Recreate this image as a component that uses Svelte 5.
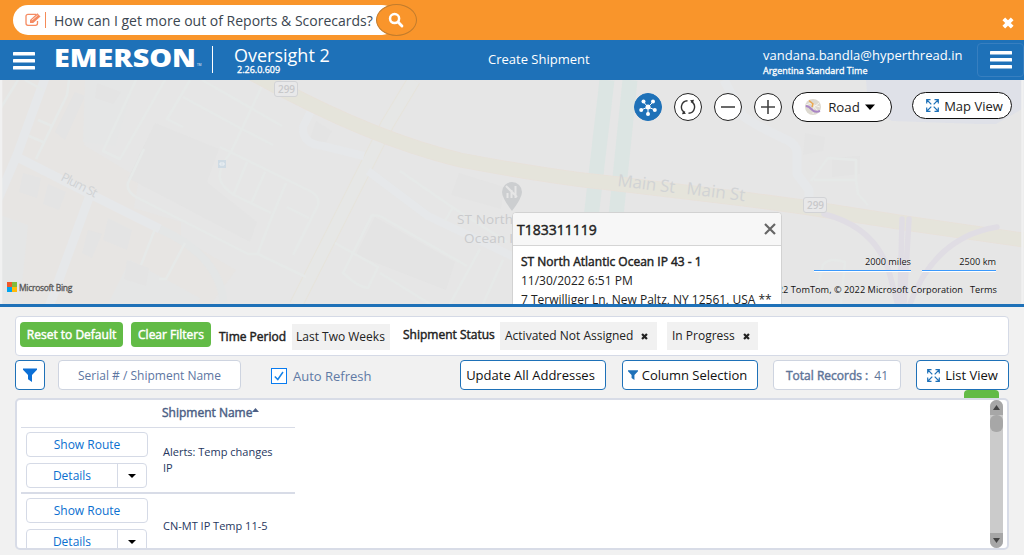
<script>
  let autoRefresh = $state(true);
  const shipments = ['Alerts: Temp changes IP', 'CN-MT IP Temp 11-5'];
</script>

{#snippet funnel(size)}
  <svg width={size} height={size} viewBox="0 0 14 14"><path fill="currentColor" d="M0 .5h14v1.300L9 7v7L5 11.200V7L0 1.800z" /></svg>
{/snippet}

{#snippet expand()}
  <svg width="13" height="13" viewBox="0 0 13 13" fill="none" stroke="#1e71b8" stroke-width="1.200">
    <path d="M.7 4.500V.7h3.800M8.500.7h3.800v3.800M12.300 8.500v3.800H8.500M4.500 12.300H.7V8.500M1 1l4.300 4.300M12 1 7.700 5.300M12 12 7.700 7.700M1 12l4.300-4.300" />
  </svg>
{/snippet}

{#snippet bars()}
  <svg class="bars" width="22" height="18" viewBox="0 0 22 18" fill="#fff"><rect y="0" width="22" height="3.600" rx=".6" /><rect y="7" width="22" height="3.600" rx=".6" /><rect y="14" width="22" height="3.600" rx=".6" /></svg>
{/snippet}

{#snippet cross(size)}
  <svg width={size} height={size} viewBox="0 0 10 10"><path d="M1.500 1.500 8.500 8.500M8.500 1.500 1.500 8.500" stroke="currentColor" stroke-width="3.200" /></svg>
{/snippet}

<div class="page">
  <div class="help">
    <div class="question">
      <svg class="edit" width="17" height="14" viewBox="0 0 17 14" fill="none" stroke="#f58b62" stroke-width="1.300">
        <path d="M11 1.300H3A2 2 0 0 0 1 3.300v7a2 2 0 0 0 2 2h7.500a2 2 0 0 0 2-2V8" />
        <path d="M5 10V6.900L12.300.3l3.200 3.100L8.200 10z" fill="#f58b62" stroke="none" />
        <path d="m6.800 7.200 5.700-4.800" stroke="#fff" stroke-width=".7" />
      </svg>
      <i></i><span>How can I get more out of Reports &amp; Scorecards?</span>
    </div>
    <button class="search" aria-label="Search">
      <svg width="16" height="16" viewBox="0 0 18 18" fill="none" stroke="#fff"><circle cx="7.400" cy="7.400" r="5.100" stroke-width="2.800" /><path d="m11.300 11.300 4.400 4.400" stroke-width="3.200" stroke-linecap="round" /></svg>
    </button>
    <button class="dismiss" aria-label="Close">{@render cross(12)}</button>
  </div>

  <header>
    <button class="menu" aria-label="Menu">{@render bars()}</button>
    <svg class="logo" width="151" height="30" viewBox="0 0 151 30" fill="#fff">
      <text x="0" y="21" font-size="23.800" font-weight="800" textLength="142" lengthAdjust="spacingAndGlyphs">EMERSON</text>
      <text x="143" y="20" font-size="3">TM</text>
    </svg>
    <div class="product"><strong>Oversight 2</strong><small>2.26.0.609</small></div>
    <span class="create">Create Shipment</span>
    <div class="user"><span>vandana.bandla@hyperthread.in</span><small>Argentina Standard Time</small></div>
    <button class="menu right" aria-label="Options">{@render bars()}</button>
  </header>

  <section class="map">
    <svg class="tiles" width="1024" height="224" viewBox="0 0 1024 224" fill="none">
      <rect width="1024" height="224" fill="#e6e6e6" />
      <path d="M0 0h92L84 65l55 33-5 30 47 14 0 16 55 32-25 34H0z" fill="#e7e5e3" />
      <path d="M0 135 28 145 20 224H0zM85 0h50l-20 66-32-4zM130 180l70 38-2 6h-90z" fill="#e5e6e6" />
      <g fill="#e4e4e4">
        <path d="m155 43 64 26-12 33 50 40-7 20-122-64zM97 3l24 9-8 12-18-6zM65 60l-10-8 20-40 10 4zM23 93l18 5-4 20-18-6zM48 104l18 8-7 18-16-6zM88 150l14 4-10 24-10-5zM108 138l24 12-5 20-24-10zM127 180l22 8-3 18-22-7zM316 41l16 10-8 15-15-4zM459 93l45 14-3 22-50-14zM375 137l80 45-9 28-90-35zM805 53l20 4-2 14-20 4zM832 78l28-2v18l-28 3z" />
      </g>
      <path d="M866 0h158v28l-28 16h-17l-87-3-24-15z" fill="#dfe1e8" />
      <g stroke="#dce5e3" stroke-width="15"><path d="M607 0 581 224M630 0 607 224" /></g>
      <g stroke="#e6e4dc" stroke-width="14"><path d="m414 0-27 45-91 180" /></g>
      <g stroke="#e6e7e6" stroke-width="12"><path d="m414 0-27 45-91 180" /></g>
      <g stroke="#e6e8ea" stroke-linejoin="round">
        <path d="M45-2 17 75-4 124M17 77l73 37 70 35M90 115l-41 112" stroke-width="9" />
        <path d="M160 149q62 28 64 78" stroke="#e4e6e6" stroke-width="8" />
        <path d="m312 29-9 18q-1 17 20 19l41 10" stroke-width="8" />
        <path d="m368 91 60 45 88 42 40 30" stroke-width="8" />
        <path d="m724 0 19 36q10 8 44 24 9 4 10 12v22l12 16v12" stroke-width="9" />
      </g>
      <g stroke="#e6e9e8" stroke-width="2.500" stroke-linejoin="round">
        <path d="m18 0-18 29M69 0 67 15 36 79M25 0l18 10M38 40l14 6M29 56l14 6M136 0l-33 71 17 8 45-79M190 0l-23 39 16 8M183 17l57 31 33 17M202 0l80 46M262 6l-31 66q-13 16-11 27 2 8 14 16l37 18M220 67l90 44q10 5 8 14l-25 50M247 82l-14 34M265 92l-14 32M286 103l-15 36-13 34M287 127l22 11M144 69l-16 34q-2 8 8 14l112 57h10l48 23M155 149l-14 36M185 163l-19 36h-7M400 91l52 36 55 35M453 127l-8 14M362 155l-19 38q15 14 25 15l10-21-43-24M362 155l10-20 8 1 87 50M480 169l-30 55M503 180l-20 44M380 193l50 31" />
        <path d="m811 101 17-23 28 2v20h-42M856 100l2 14 10 11" />
        <path d="m817 210 6-25q6-8 22-3l-4 42" />
      </g>
      <path d="M250-8q115 65 210 88 90 17 150 23l134 16 59 8 102 16 125 18" stroke="#e8e1da" stroke-width="15" />
      <path d="M250-8q115 65 210 88 90 17 150 23l134 16 59 8 102 16 125 18" stroke="#e5e4db" stroke-width="13.500" />
      <path d="M824 134q55 14 67 65l7 27M902 139l-2 85M909 139l-5 85M997 147q-62 10-87 77" stroke="#e0dde4" stroke-width="5.500" stroke-linecap="round" />
      <g fill="#d1d3d5">
        <text x="60" y="100" font-size="12.500" transform="rotate(27 60 100)" textLength="39">Plum St</text>
        <text x="617" y="106" font-size="17" transform="rotate(7 617 106)" textLength="58">Main St</text>
        <text x="686" y="114" font-size="17" transform="rotate(7 686 114)" textLength="59">Main St</text>
        <text x="457" y="144" font-size="13.500" textLength="56" fill="#c9cacc">ST North</text>
        <text x="464" y="163" font-size="13.500" textLength="49" fill="#c9cacc">Ocean I</text>
      </g>
      <g fill="#e8e8e9" stroke="#d2d3d6"><rect x="274.500" y="1.500" width="23" height="15" rx="2.500" /><rect x="803.500" y="117.500" width="23" height="15" rx="2.500" /></g>
      <g font-size="10" fill="#c8c9cb" font-weight="600"><text x="278" y="13" textLength="17">299</text><text x="807" y="129" textLength="17">299</text></g>
      <path d="M512 131q-10-13-10-19a10 10 0 0 1 20 0q0 6-10 19z" fill="#ccced0" />
      <path d="M507.500 118v-5M511.500 118v-8M515.500 118v-12M506 106l11 11" stroke="#e6e6e6" stroke-width="2" />
      <rect x="218" y="80" width="8" height="8" fill="#cfdbe4" /><path d="M220 85v-2h4v2z" stroke="#edf1f4" />
      <path d="M1 0v224M1022.500 0v224" stroke="#f1f1f1" stroke-width="2.500" />
    </svg>

    <div class="bing">
      <svg width="10" height="10"><path fill="#f1592a" d="M0 0h5v5H0z" /><path fill="#80bb3e" d="M5 0h5v5H5z" /><path fill="#00a4ef" d="M0 5h5v5H0z" /><path fill="#ffba08" d="M5 5h5v5H5z" /></svg>
      <span>Microsoft Bing</span>
    </div>

    <div class="controls">
      <button class="round hub" aria-label="Cluster">
        <svg width="18" height="18" viewBox="0 0 18 18" fill="#fff" stroke="#fff"><path d="m9 9 5-5M9 9 4.500 4M9 9 2 12M9 9l0 7M9 9l7 3" stroke-width="1" /><g stroke="none"><circle cx="9" cy="9" r="2.500" /><circle cx="14" cy="3.500" r="2" /><circle cx="4.500" cy="3.500" r="2" /><circle cx="2.200" cy="12" r="2" /><circle cx="9" cy="16" r="2" /><circle cx="15.800" cy="12" r="2" /></g></svg>
      </button>
      <button class="round" aria-label="Refresh">
        <svg width="16" height="16" viewBox="0 0 16 16" fill="none" stroke="#333" stroke-width="1.400"><path d="M5 13.500A6.200 6.200 0 0 1 7.500 1.700M11 2.500A6.200 6.200 0 0 1 8.500 14.300" /><path d="m10 1.300 4-.6-1.200 3.600zM6 14.700l-4 .6 1.200-3.600z" fill="#333" stroke="none" /></svg>
      </button>
      <button class="round" aria-label="Zoom out"><svg width="16" height="16"><path d="M1 8h14" stroke="#444" stroke-width="1.600" /></svg></button>
      <button class="round" aria-label="Zoom in"><svg width="16" height="16"><path d="M1 8h14M8 1v14" stroke="#444" stroke-width="1.600" /></svg></button>
      <button class="pill road">
        <svg width="16" height="16" viewBox="0 0 16 16" fill="none"><circle cx="8" cy="8" r="8" fill="#ddd9d0" /><path d="m4 1 5 5 6 2M1 6l5-2 7 8M8 15l1-7 5-4" stroke="#f6f4ee" /><path d="M4 1.500 8 5l-1 3" stroke="#eaa64f" stroke-width="1.500" /><path d="M.8 7q3 0 6 3.500T15 12" stroke="#a985c5" stroke-width="2" /></svg>
        <span>Road</span>
        <svg width="10" height="6"><path d="M0 .5h10L5 6z" /></svg>
      </button>
      <button class="pill view">{@render expand()}<span>Map View</span></button>
    </div>

    <div class="scales"><span class="mi">2000 miles</span><span class="km">2500 km</span></div>
    <div class="copyright"><span>© 2022 TomTom, © 2022 Microsoft Corporation</span><a href="#terms">Terms</a></div>

    <div class="popup">
      <div class="title"><span>T183311119</span><svg width="12" height="12"><path d="m1 1 10 10M11 1 1 11" stroke="#666" stroke-width="2.200" /></svg></div>
      <div class="body"><b>ST North Atlantic Ocean IP 43 - 1</b><span class="when">11/30/2022 6:51 PM</span><span class="where">7 Terwilliger Ln, New Paltz, NY 12561, USA **</span></div>
    </div>
  </section>

  <main>
    <div class="filters">
      <button class="green reset">Reset to Default</button>
      <button class="green clear">Clear Filters</button>
      <b class="period">Time Period</b><span class="tag weeks">Last Two Weeks</span>
      <b class="status">Shipment Status</b>
      <span class="tag activated"><span>Activated Not Assigned</span>{@render cross(7)}</span>
      <span class="tag progress"><span>In Progress</span>{@render cross(7)}</span>
    </div>

    <div class="tools">
      <button class="tool funnel" aria-label="Filter">{@render funnel(14)}</button>
      <input placeholder="Serial # / Shipment Name" aria-label="Serial or shipment name" />
      <label><input type="checkbox" bind:checked={autoRefresh} /><span class="box">{#if autoRefresh}<svg width="10" height="10"><path d="m.8 5.500 3 3L9 1" fill="none" stroke="#1683e8" stroke-width="1.500" /></svg>{/if}</span><span>Auto Refresh</span></label>
      <button class="tool update">Update All Addresses</button>
      <button class="tool columns">{@render funnel(10)}<span>Column Selection</span></button>
      <div class="total"><b>Total Records :</b><span>41</span></div>
      <button class="tool list">{@render expand()}<span>List View</span></button>
    </div>

    <div class="tablewrap">
      <div class="export"></div>
      <div class="tablebox">
        <div class="table">
          <div class="head"><span>Shipment Name</span><svg width="7" height="4"><path d="M0 4h7L3.500 0z" fill="#4c5f85" /></svg></div>
          {#each shipments as name}
            <div class="row">
              <div class="actions">
                <button class="route">Show Route</button>
                <div class="split"><button>Details</button><button class="caret" aria-label="More"><svg width="8" height="4"><path d="M0 0h8L4 4z" /></svg></button></div>
              </div>
              <span class="name">{name}</span>
            </div>
          {/each}
        </div>
        <div class="bar">
          <span class="arrow"><svg width="7" height="5"><path d="M0 5h7L3.500 0z" fill="#444" /></svg></span>
          <span class="thumb"></span>
          <span class="arrow end"><svg width="7" height="5"><path d="M0 0h7L3.500 5z" fill="#444" /></svg></span>
        </div>
      </div>
    </div>
  </main>
</div>

<style>
  :global(body) { margin: 0; overflow: hidden; background: #f1f1f1; }
  * { box-sizing: border-box; }
  .page { width: 1024px; height: 555px; overflow: hidden; display: flex; flex-direction: column; font-family: "Open Sans", "Noto Sans", sans-serif; font-size: 13px; color: #222; background: #f1f1f1; }
  button, input { font: inherit; margin: 0; padding: 0; border: 0; background: none; color: inherit; }
  button { display: flex; align-items: center; justify-content: center; white-space: nowrap; flex: none; }
  span, b, small, strong { white-space: nowrap; }
  svg { flex: none; display: block; }
  b, .green, .title span, .head span { font-weight: 400; -webkit-text-stroke: .45px currentColor; }

  .help { height: 40px; flex: none; background: #f9952b; display: flex; padding-left: 13px; }
  .question { width: 384px; height: 30px; margin-top: 5px; padding-left: 12px; background: #fff; border-radius: 15px; display: flex; align-items: center; font-size: 14px; color: #3b4650; }
  .question i { width: 1px; height: 16px; margin: 0 8px 0 3px; background: #f58b58; }
  .search { width: 41px; height: 32px; margin: 4px 0 0 -21px; border-radius: 50%; background: #f9952b; border: 1px solid #c17c2d; }
  .search svg { margin-right: 2px; }
  .dismiss { color: #fff; margin: 17px 10px 0 auto; height: 12px; }

  header { height: 40px; flex: none; background: #1e71b8; color: #fff; display: flex; align-items: flex-start; }
  .menu { margin: 11px 0 0 13px; width: 21px; height: 19px; }
  .logo { margin: 6px 0 0 20px; }
  .product { margin: 6px 0 0 7px; height: 27px; padding-left: 21px; border-left: 1px solid #fff; width: 160px; }
  .product strong { display: block; font-size: 18px; line-height: 18px; font-weight: 400; }
  .product small { display: block; font-size: 9px; line-height: 11px; margin-left: 3px; -webkit-text-stroke: .3px #fff; }
  .create { margin: 11px 0 0 116px; width: 102px; line-height: 17px; }
  .user { margin: 7px 0 0 173px; width: 214px; }
  .user span { display: block; line-height: 17px; letter-spacing: .02px; }
  .user small { display: block; font-size: 9px; line-height: 14px; -webkit-text-stroke: .3px #fff; }
  .menu.right { width: 47px; height: 34px; margin: 3px -1px 0 0; border: 1px solid #377fc0; border-radius: 4px; }

  .map { height: 227px; flex: none; position: relative; overflow: hidden; border-bottom: 3px solid #1e71b8; }
  .tiles { position: absolute; inset: 0; }
  .bing { position: absolute; left: 7px; top: 202px; display: flex; gap: 2px; font-size: 8.500px; line-height: 11px; color: #555; letter-spacing: -.3px; -webkit-text-stroke: .3px #555; }
  .controls { position: absolute; left: 634px; top: 12px; display: flex; gap: 12px; align-items: center; color: #222; }
  .round { width: 28px; height: 28px; border-radius: 50%; border: 1px solid #222; background: #fff; }
  .hub { background: #1e71b8; border-color: #1e71b8; }
  .pill { background: #fff; border: 1px solid #111; height: 30px; border-radius: 15px; font-size: 13px; }
  .road { width: 100px; margin-left: -2px; gap: 5px; padding-right: 4px; }
  .road span { margin-left: 2px; font-size: 13.300px; }
  .view { width: 100px; height: 27px; margin: -3px 0 0 8px; gap: 5px; padding-left: 5px; }
  .scales { position: absolute; right: 28px; top: 175px; display: flex; gap: 11px; font-size: 9.200px; line-height: 13px; text-align: right; text-shadow: 0 0 1px #fff; color: #111; }
  .scales span { border-bottom: 1px solid #3b99fc; box-shadow: 0 1px #fff; height: 16px; }
  .mi { width: 97px; }
  .km { width: 74px; }
  .copyright { position: absolute; right: 27px; top: 203px; display: flex; gap: 7px; font-size: 9.200px; line-height: 13px; letter-spacing: .03px; color: #111; }
  .copyright a { color: inherit; text-decoration: none; }
  .popup { position: absolute; left: 512px; top: 132px; width: 270px; height: 120px; background: #fff; border: 1px solid #d2d2d2; border-radius: 4px 4px 0 0; overflow: hidden; color: #222; }
  .title { height: 33px; padding: 0 5px 0 4px; background: #f7f7f7; border-bottom: 1px solid #d5d5d5; display: flex; justify-content: space-between; align-items: center; font-size: 14px; }
  .body { padding: 6px 8px; display: flex; flex-direction: column; font-size: 12px; line-height: 19px; }

  main { flex: 1; padding: 9px 15px 0; display: flex; flex-direction: column; }
  .filters { width: 994px; height: 40px; background: #fff; border: 1px solid #d5dae6; border-radius: 4px; display: flex; padding: 5px 4px; font-size: 12px; }
  .green { height: 25px; border-radius: 4px; background: #62bb46; color: #fff; }
  .reset { width: 103px; }
  .clear { width: 80px; margin-left: 8px; }
  .filters b { line-height: 17px; }
  .period { width: 73px; margin: 6px 0 0 8px; }
  .status { width: 97px; margin: 4px 0 0 13px; }
  .tag { background: #f1f1f1; height: 28px; padding: 0 0 2px 5px; display: flex; align-items: center; }
  .weeks { width: 98px; height: 26px; margin-top: 2px; padding-left: 4px; }
  .activated { width: 157px; gap: 8px; }
  .progress { width: 91px; margin-left: 10px; gap: 8px; }
  .tag :global(svg) { margin-top: 2px; }
  .tools { display: flex; margin-top: 4px; height: 30px; font-size: 13px; width: 994px; }
  .tool, .total, .tools > input { height: 30px; flex: none; background: #fff; border: 1px solid #1e71b8; border-radius: 4px; }
  .tool { color: #111; }
  .tool.funnel { width: 30px; color: #0b6fd6; }
  .tools > input { width: 183px; margin-left: 13px; border-color: #ced4e0; text-align: center; font-size: 12px; }
  .tools > input::placeholder { color: #5d76a2; opacity: 1; }
  label { display: flex; align-items: center; margin-left: 30px; width: 189px; color: #607aa5; gap: 6px; padding-top: 2px; }
  label input { display: none; }
  .box { width: 16px; height: 16px; background: #fff; border: 1px solid #087bf0; display: grid; place-items: center; }
  .update { width: 146px; padding-right: 5px; }
  .columns { width: 136px; margin-left: 16px; gap: 4px; padding-right: 5px; }
  .columns :global(svg) { color: #1e71b8; }
  .total { width: 128px; margin-left: 15px; border-color: #ced4e0; display: flex; align-items: center; padding-left: 12px; gap: 6px; font-size: 12px; color: #607599; }
  .list { width: 93px; margin-left: 15px; gap: 5px; }
  .tablewrap { width: 994px; position: relative; padding-top: 8px; }
  .export { position: absolute; left: 949px; top: 0; width: 35px; height: 9px; background: #62bb46; border-radius: 4px 4px 0 0; }
  .tablebox { position: relative; height: 152px; border: 2px solid #d8dce7; border-radius: 5px; background: #fff; overflow: hidden; display: flex; justify-content: space-between; padding: 0 4px; }
  .table { width: 274px; }
  .head { height: 28px; border-bottom: 1px solid #d8dce7; padding: 0 0 3px 141px; display: flex; align-items: center; font-size: 12px; color: #4c5f85; }
  .head svg { margin-top: -4px; }
  .row { height: 66px; border-bottom: 2px solid #d8dce7; display: flex; padding: 4px 0 0 5px; }
  .actions { width: 122px; color: #0b6fd0; font-size: 12px; }
  .route { width: 122px; height: 25px; border: 1px solid #d5dae6; border-radius: 4px; }
  .split { display: flex; width: 121px; height: 25px; margin-top: 6px; border: 1px solid #d5dae6; border-radius: 4px; }
  .split button { width: 90px; }
  .split .caret { width: 29px; border-left: 1px solid #d5dae6; color: #222; }
  .name { width: 120px; margin: 0 0 4px 15px; align-self: center; white-space: normal; font-size: 11px; line-height: 16px; color: #26375e; }
  .bar { width: 13px; height: 148px; border-radius: 7px; background: #cbcbcb; overflow: hidden; display: flex; flex-direction: column; }
  .arrow { height: 15px; background: #a7a7a7; display: grid; place-items: center; }
  .thumb { height: 17px; background: #a7a7a7; border-radius: 6px; }
  .end { margin-top: auto; }
</style>
